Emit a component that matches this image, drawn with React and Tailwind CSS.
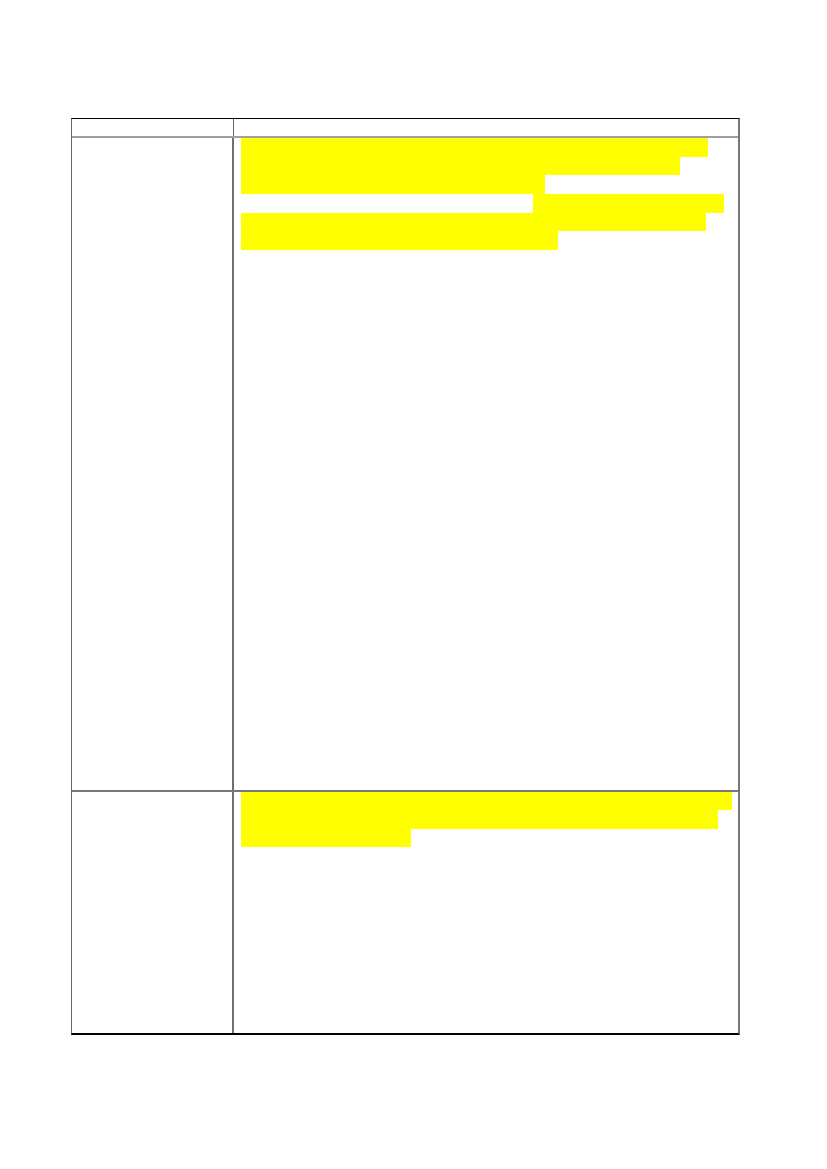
import React from "react";

const rowOne = [
  { ml: 0, w: 467 },
  { ml: 0, w: 439 },
  { ml: 0, w: 304 },
  { ml: 292, w: 191 },
  { ml: 0, w: 465 },
  { ml: 0, w: 317 },
];

const rowTwo = [
  { ml: 0, w: 491 },
  { ml: 0, w: 477 },
  { ml: 0, w: 170 },
];

function Highlight({ lines, h }) {
  return (
    <div className="flex flex-col">
      {lines.map((l, i) => (
        <div
          key={i}
          className="bg-[#ffff00]"
          style={{ marginLeft: l.ml, width: l.w, height: h }}
        />
      ))}
    </div>
  );
}

export default function App() {
  return (
    <div className="w-[827px] h-[1169px] bg-white font-['Liberation_Sans',sans-serif]">
      <div className="pt-[118px] pl-[71px]">
        <div className="w-[669px] border-t border-b-2 border-t-black border-b-black border-l border-r-2 border-l-[#666] border-r-[#777]">
          {/* header */}
          <div className="flex h-[19px] border-b-2 border-b-[#a0a0a0]">
            <div className="w-[162px] border-r border-r-[#666]"></div>
            <div className="flex-1"></div>
          </div>
          {/* row 1 */}
          <div className="flex h-[654px] border-b-2 border-b-[#777]">
            <div className="w-[162px] border-r-2 border-r-[#707070]"></div>
            <div className="flex-1 pl-[7px] pt-[0px]">
              <Highlight lines={rowOne} h={18.67} />
            </div>
          </div>
          {/* row 2 */}
          <div className="flex h-[241px]">
            <div className="w-[162px] border-r-2 border-r-[#707070]"></div>
            <div className="flex-1 pl-[7px] pt-[0px]">
              <Highlight lines={rowTwo} h={18.4} />
            </div>
          </div>
        </div>
      </div>
    </div>
  );
}
